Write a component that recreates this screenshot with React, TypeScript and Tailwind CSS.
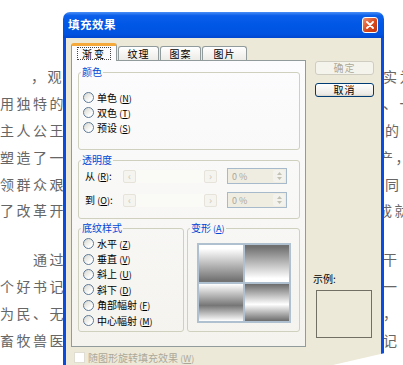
import React from "react";

const lines: { l: string; lp: string; r: string; rp: string; gap?: boolean }[] = [
  { l: "，观", lp: "pl-[31px]", r: "实为", rp: "pl-[5px]" },
  { l: "用独特的", lp: "pl-[0px]", r: "、一", rp: "pl-[5px]" },
  { l: "主人公王", lp: "pl-[0px]", r: "的", rp: "pl-[7px]" },
  { l: "塑造了一", lp: "pl-[0px]", r: "产，", rp: "pl-[1px]" },
  { l: "领群众艰", lp: "pl-[0px]", r: "同", rp: "pl-[7px]" },
  { l: "了改革开", lp: "pl-[0px]", r: "成就", rp: "pl-[0px]" },
  { l: "通过", lp: "pl-[33px]", r: "干", rp: "pl-[5px]", gap: true },
  { l: "个好书记", lp: "pl-[0px]", r: "一", rp: "pl-[5px]" },
  { l: "为民、无", lp: "pl-[0px]", r: "，", rp: "pl-[5px]" },
  { l: "畜牧兽医", lp: "pl-[0px]", r: "记", rp: "pl-[5px]" },
];

function Doc() {
  return (
    <div className="pt-[63.6px] text-[14px] tracking-[2.5px] text-[#666]">
      {lines.map((ln, i) => (
        <div
          key={i}
          className={`flex h-[26.8px] items-center whitespace-nowrap ${ln.gap ? "mt-[22px]" : ""}`}
        >
          <span className={`w-[378px] shrink-0 ${ln.lp}`}>{ln.l}</span>
          <span className={ln.rp}>{ln.r}</span>
        </div>
      ))}
    </div>
  );
}

function Radio({ label, k, h = "h-[15px]" }: { label: string; k: string; h?: string }) {
  return (
    <div className={`flex items-center ${h}`}>
      <span className="h-[11px] w-[11px] shrink-0 rounded-full border border-[#5d7a98] bg-[linear-gradient(135deg,#d6d5ce,#ffffff_75%)]" />
      <span className="ml-[3px] whitespace-nowrap text-[10px] leading-none text-black">
        {label} <span className="text-[9px]">(<u>{k}</u>)</span>
      </span>
    </div>
  );
}

function Group({
  title,
  k,
  className,
  children,
}: {
  title: string;
  k?: string;
  className: string;
  children: React.ReactNode;
}) {
  return (
    <fieldset className={`rounded-[3px] border border-[#D0D0BF] ${className}`}>
      <legend className="ml-[2px] px-[1px] text-[10px] leading-[12px] text-[#0046D5]">
        {title}
        {k && (
          <span className="text-[9px]">
            {" "}
            (<u>{k}</u>)
          </span>
        )}
      </legend>
      {children}
    </fieldset>
  );
}

function Slider() {
  return (
    <div className="flex h-[13px] w-[94px]">
      <div className="flex w-[13px] items-center justify-center rounded-[2px] border border-[#E6E4DA] bg-[#F5F4EF] text-[10px] leading-none text-[#C9C7BA]">
        ‹
      </div>
      <div className="flex-1 bg-[#FAFAF7]" />
      <div className="flex w-[13px] items-center justify-center rounded-[2px] border border-[#E6E4DA] bg-[#F5F4EF] text-[10px] leading-none text-[#C9C7BA]">
        ›
      </div>
    </div>
  );
}

function Spin() {
  return (
    <div className="ml-[10px] flex h-[16px] w-[60px] items-center border border-[#A7BACB] bg-[#EFEDE2]">
      <span className="pl-[4px] text-[9px] leading-none text-[#ACA899]">0 %</span>
      <div className="ml-auto mr-[1px] flex h-[12px] w-[12px] flex-col items-center justify-center gap-[2px] rounded-[2px] bg-[#F3F2EC]">
        <svg width="5" height="3" viewBox="0 0 5 3">
          <path d="M0 3L2.5 0L5 3Z" fill="#C3C1B4" />
        </svg>
        <svg width="5" height="3" viewBox="0 0 5 3">
          <path d="M0 0L2.5 3L5 0Z" fill="#C3C1B4" />
        </svg>
      </div>
    </div>
  );
}

function Tab({ label, w }: { label: string; w: string }) {
  return (
    <div
      className={`ml-[1px] flex h-[14px] items-center justify-center rounded-t-[3px] border border-b-0 border-[#919B9C] bg-[linear-gradient(to_bottom,#ffffff,#ECEBE6)] text-[10px] leading-none tracking-[1px] text-black ${w}`}
    >
      {label}
    </div>
  );
}

function Dialog() {
  return (
    <div className="absolute left-[63px] top-[12px] flex h-[360px] w-[321px] flex-col font-['Noto_Sans_CJK_SC',sans-serif]">
      <div className="flex h-[26px] items-center rounded-t-[7px] bg-[linear-gradient(to_bottom,#4a8ff7_0%,#0b5fea_14%,#0057e5_50%,#0053e0_85%,#0046d0_100%)] pl-[5px] pr-[6px]">
        <span className="text-[11.5px] font-bold tracking-[0.5px] text-white">填充效果</span>
        <div className="ml-auto flex h-[16px] w-[16px] items-center justify-center rounded-[3px] border border-white bg-[linear-gradient(135deg,#f2906c,#d8481d_55%,#c0360f)]">
          <svg width="8" height="8" viewBox="0 0 8 8">
            <path d="M1 1L7 7M7 1L1 7" stroke="#fff" strokeWidth="1.8" strokeLinecap="round" />
          </svg>
        </div>
      </div>

      <div className="flex flex-1 border-x-[3px] border-[#0A4CDF] bg-[#ECE9D8]">
        <div className="pl-[5px] pt-[5px]">
          <div className="relative z-10 flex h-[17px] items-end">
            <div className="-mb-px flex h-[18px] w-[46px] items-center justify-center rounded-t-[3px] border-x border-t-[3px] border-x-[#919B9C] border-t-[#F5A93A] bg-[#FCFCFE]">
              <span className="border border-dotted border-[#444] px-[4px] text-[10px] leading-[11px] tracking-[2px] text-black">
                渐变
              </span>
            </div>
            <Tab label="纹理" w="w-[41px]" />
            <Tab label="图案" w="w-[41px]" />
            <Tab label="图片" w="w-[45px]" />
          </div>

          <div className="h-[287px] w-[235px] border border-[#919B9C] bg-[linear-gradient(to_bottom,#fcfcfe,#f4f3ee)] pl-[6px] pt-[5px]">
            <Group title="颜色" className="h-[84px] w-[222px]">
              <div className="pl-[4px] pt-[12px]">
                <Radio label="单色" k="N" />
                <Radio label="双色" k="T" />
                <Radio label="预设" k="S" />
              </div>
            </Group>

            <Group title="透明度" className="mt-[4px] h-[65px] w-[222px]">
              <div className="pl-[6px] pt-[2px]">
                <div className="flex h-[16px] items-center">
                  <span className="w-[38px] text-[10px] leading-none text-black">
                    从 <span className="text-[9px]">(<u>R</u>)</span>:
                  </span>
                  <Slider />
                  <Spin />
                </div>
                <div className="mt-[8px] flex h-[16px] items-center">
                  <span className="w-[38px] text-[10px] leading-none text-black">
                    到 <span className="text-[9px]">(<u>O</u>)</span>:
                  </span>
                  <Slider />
                  <Spin />
                </div>
              </div>
            </Group>

            <div className="mt-[3px] flex gap-[3px]">
              <Group title="底纹样式" className="h-[110px] w-[106px]">
                <div className="pl-[4px] pt-[2px]">
                  <Radio label="水平" k="Z" h="h-[15.4px]" />
                  <Radio label="垂直" k="V" h="h-[15.4px]" />
                  <Radio label="斜上" k="U" h="h-[15.4px]" />
                  <Radio label="斜下" k="D" h="h-[15.4px]" />
                  <Radio label="角部幅射" k="F" h="h-[15.4px]" />
                  <Radio label="中心幅射" k="M" h="h-[15.4px]" />
                </div>
              </Group>
              <Group title="变形" k="A" className="h-[110px] w-[113px]">
                <div className="pl-[9px] pt-[8px]">
                  <div className="grid h-[80px] w-[94px] grid-cols-2 grid-rows-2 gap-[2px] bg-[#AFC1D0] p-[2px]">
                    <div className="bg-[linear-gradient(to_bottom,#ffffff_10%,#737373_95%)]" />
                    <div className="bg-[linear-gradient(to_bottom,#707070_5%,#ffffff_90%)]" />
                    <div className="bg-[linear-gradient(to_bottom,#ffffff_0%,#767676_58%,#ffffff_100%)]" />
                    <div className="bg-[linear-gradient(to_bottom,#6c6c6c_0%,#ffffff_55%,#6c6c6c_100%)]" />
                  </div>
                </div>
              </Group>
            </div>
          </div>

          <div className="mt-[4px] flex h-[13px] items-center pl-[3px]">
            <span className="h-[11px] w-[11px] border border-[#E0DED3] bg-white" />
            <span className="ml-[3px] text-[10px] leading-none text-[#ACA899]">
              随图形旋转填充效果 <span className="text-[9px]">(<u>W</u>)</span>
            </span>
          </div>
        </div>

        <div className="ml-[9px] flex w-[59px] flex-col pt-[23px]">
          <div className="flex h-[14px] items-center justify-center rounded-[3px] border border-[#CFCDC2] bg-[#F5F4EC] text-[10px] leading-none tracking-[1px] text-[#ACA899]">
            确定
          </div>
          <div className="mt-[8px] flex h-[14px] items-center justify-center rounded-[3px] border border-[#003C74] bg-[linear-gradient(to_bottom,#ffffff,#ECEBE6_85%,#D8D2C6)] text-[10px] leading-none tracking-[1px] text-black">
            取消
          </div>
          <span className="-ml-[2px] mt-[176px] text-[10px] leading-[12px] text-black">示例:</span>
          <div className="ml-[1px] mt-[5px] h-[48px] w-[56px] border border-[#716F64] bg-[#ECE9D8]" />
        </div>
      </div>
    </div>
  );
}

export default function App() {
  return (
    <div className="relative h-[365px] w-[403px] overflow-hidden bg-white font-['Noto_Sans_CJK_SC',sans-serif]">
      <Doc />
      <Dialog />
      <svg className="absolute left-0 top-0" width="403" height="365" viewBox="0 0 403 365">
        <polygon points="333,365 385,353 385,365" fill="#fff" />
      </svg>
    </div>
  );
}
